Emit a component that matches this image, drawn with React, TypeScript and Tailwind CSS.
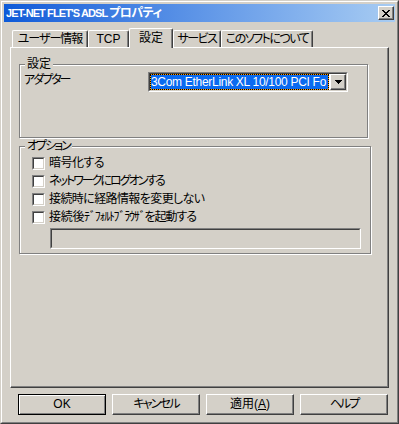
import React from "react";

function Sunken({ className = "", innerClass = "", children }: { className?: string; innerClass?: string; children?: React.ReactNode }) {
  return (
    <div className={"border border-t-[#808080] border-l-[#808080] border-r-white border-b-white " + className}>
      <div className={"w-full h-full border border-t-[#404040] border-l-[#404040] border-r-[#d4d0c8] border-b-[#d4d0c8] " + innerClass}>
        {children}
      </div>
    </div>
  );
}

function Check({ label, t }: { label: React.ReactNode; t: string }) {
  return (
    <div className="flex items-center h-[13px] gap-[4px]">
      <Sunken className="w-[13px] h-[13px] shrink-0" innerClass="bg-white" />
      <span className={"leading-[13px] whitespace-nowrap " + t}>{label}</span>
    </div>
  );
}

function Btn({ children, def = false, t = "" }: { children: React.ReactNode; def?: boolean; t?: string }) {
  return def ? (
    <div className={"w-[88px] h-[21px] border border-black shadow-[inset_1px_1px_0_#fff,inset_-1px_-1px_0_#808080] flex items-center justify-center leading-[14px] pb-[1px] " + t}>
      {children}
    </div>
  ) : (
    <div className={"w-[88px] h-[21px] border border-t-white border-l-white border-r-[#404040] border-b-[#404040] shadow-[inset_-1px_-1px_0_#808080] flex items-center justify-center leading-[14px] pb-[1px] " + t}>
      {children}
    </div>
  );
}

function Tab({ label, w, active = false }: { label: string; w: string; active?: boolean }) {
  return active ? (
    <div
      className={
        "relative z-10 -mb-px h-[20px] shrink-0 bg-[#d4d0c8] border-l border-t border-r border-l-white border-t-white border-r-[#404040] rounded-tl-[2px] rounded-tr-[2px] shadow-[inset_-1px_0_0_#808080] flex items-start justify-center pt-[2px] leading-[14px] whitespace-nowrap " +
        w
      }
    >
      {label}
    </div>
  ) : (
    <div
      className={
        "h-[17px] shrink-0 border-l border-t border-r border-l-white border-t-white border-r-[#404040] rounded-tl-[2px] rounded-tr-[2px] shadow-[inset_-1px_0_0_#808080] flex items-center justify-center leading-[14px] whitespace-nowrap " +
        w
      }
    >
      {label}
    </div>
  );
}

function Group({ label, t = "", className, children }: { label: string; t?: string; className: string; children?: React.ReactNode }) {
  return (
    <div className={"relative border border-[#808080] shadow-[inset_1px_1px_0_#fff,1px_1px_0_#fff] " + className}>
      <div className={"absolute left-[5px] top-[-8px] px-[2px] bg-[#d4d0c8] leading-[14px] h-[14px] whitespace-nowrap " + t}>{label}</div>
      {children}
    </div>
  );
}

export default function App() {
  return (
    <div className="w-[399px] h-[424px] bg-[#d4d0c8] text-black text-[12px] font-['Liberation_Sans','Noto_Sans_CJK_JP',sans-serif] [font-feature-settings:'palt'] border border-t-[#d4d0c8] border-l-[#d4d0c8] border-r-[#404040] border-b-[#404040]">
      <div className="w-full h-full border border-t-white border-l-white border-r-[#808080] border-b-[#808080] p-[2px] flex flex-col">
        {/* title bar */}
        <div className="h-[18px] shrink-0 bg-gradient-to-r from-[#0c5ad8] to-[#a8ccf2] flex items-center justify-between">
          <span className="pl-[2px] text-white font-bold leading-[14px] whitespace-nowrap">
            <span className="text-[11px] tracking-[-0.9px] font-['Liberation_Sans',sans-serif]">JET-NET FLET'S ADSL </span>
            <span className="tracking-[-0.6px]">プロパティ</span>
          </span>
          <div className="w-[16px] h-[14px] mr-[1px] bg-[#d4d0c8] border border-t-white border-l-white border-r-[#404040] border-b-[#404040] shadow-[inset_-1px_-1px_0_#808080] flex items-center justify-center">
            <svg width="8" height="7" viewBox="0 0 8 7" shapeRendering="crispEdges" fill="#000">
              <rect x="0" y="0" width="2" height="1" />
              <rect x="6" y="0" width="2" height="1" />
              <rect x="1" y="1" width="2" height="1" />
              <rect x="5" y="1" width="2" height="1" />
              <rect x="2" y="2" width="4" height="1" />
              <rect x="3" y="3" width="2" height="1" />
              <rect x="2" y="4" width="4" height="1" />
              <rect x="1" y="5" width="2" height="1" />
              <rect x="5" y="5" width="2" height="1" />
              <rect x="0" y="6" width="2" height="1" />
              <rect x="6" y="6" width="2" height="1" />
            </svg>
          </div>
        </div>

        {/* tabs */}
        <div className="mt-[6px] h-[19px] shrink-0 flex items-end pl-[8px]">
          <div className="tracking-[-1px] flex items-end">
            <Tab label="ユーザー情報" w="w-[76px]" />
          </div>
          <Tab label="TCP" w="w-[41px]" />
          <Tab label="設定" w="w-[44px]" active />
          <div className="tracking-[-1.5px] flex items-end">
            <Tab label="サービス" w="w-[48px]" />
            <Tab label="このソフトについて" w="w-[92px]" />
          </div>
        </div>

        {/* panel */}
        <div className="mx-[6px] h-[341px] shrink-0 border border-t-white border-l-white border-r-[#404040] border-b-[#404040] shadow-[inset_-1px_-1px_0_#808080] pl-[8px] pt-[16px] flex flex-col">
          <Group label="設定" className="w-[349px] h-[74px]">
            <div className="mt-[7px] pl-[4px] flex items-start">
              <span className="w-[124px] h-[16px] leading-[16px] tracking-[-2px]">アダプター</span>
              <Sunken className="w-[200px] h-[20px]" innerClass="bg-white flex">
                <div className="w-[179px] h-full bg-[#ff9c00] border border-dotted border-black">
                  <div className="h-full bg-[#0a6af0] text-white leading-[14px] whitespace-nowrap overflow-hidden tracking-[-0.3px]">3Com EtherLink XL 10/100 PCI Fo</div>
                </div>
                <div className="ml-[1px] w-[16px] h-full bg-[#d4d0c8] border border-t-white border-l-white border-r-[#404040] border-b-[#404040] shadow-[inset_-1px_-1px_0_#808080] flex items-center justify-center">
                  <svg width="7" height="4" viewBox="0 0 7 4" shapeRendering="crispEdges" fill="#000">
                    <rect x="0" y="0" width="7" height="1" />
                    <rect x="1" y="1" width="5" height="1" />
                    <rect x="2" y="2" width="3" height="1" />
                    <rect x="3" y="3" width="1" height="1" />
                  </svg>
                </div>
              </Sunken>
            </div>
          </Group>

          <Group label="オプション" t="tracking-[-2px]" className="mt-[8px] w-[352px] h-[108px]">
            <div className="mt-[10px] pl-[12px] flex flex-col gap-[5px]">
              <Check label="暗号化する" t="tracking-[-0.5px]" />
              <Check label="ネットワークにログオンする" t="tracking-[-2px]" />
              <Check label="接続時に経路情報を変更しない" t="tracking-[-0.6px]" />
              <Check
                label={
                  <>
                    <span className="tracking-[-0.3px]">接続後</span>
                    <span className="tracking-[-1.3px]">ﾃﾞﾌｫﾙﾄﾌﾞﾗｳｻﾞ</span>
                    <span className="tracking-[-1px]">を起動する</span>
                  </>
                }
                t=""
              />
            </div>
            <Sunken className="ml-[30px] mt-[4px] w-[311px] h-[21px]" innerClass="bg-[#d4d0c8]" />
          </Group>
        </div>

        {/* buttons */}
        <div className="mt-[6px] pl-[14px] flex gap-[6px]">
          <Btn def>OK</Btn>
          <Btn t="tracking-[-1.8px]">キャンセル</Btn>
          <Btn>
            適用(<span className="underline">A</span>)
          </Btn>
          <Btn t="tracking-[-2px]">ヘルプ</Btn>
        </div>
      </div>
    </div>
  );
}
